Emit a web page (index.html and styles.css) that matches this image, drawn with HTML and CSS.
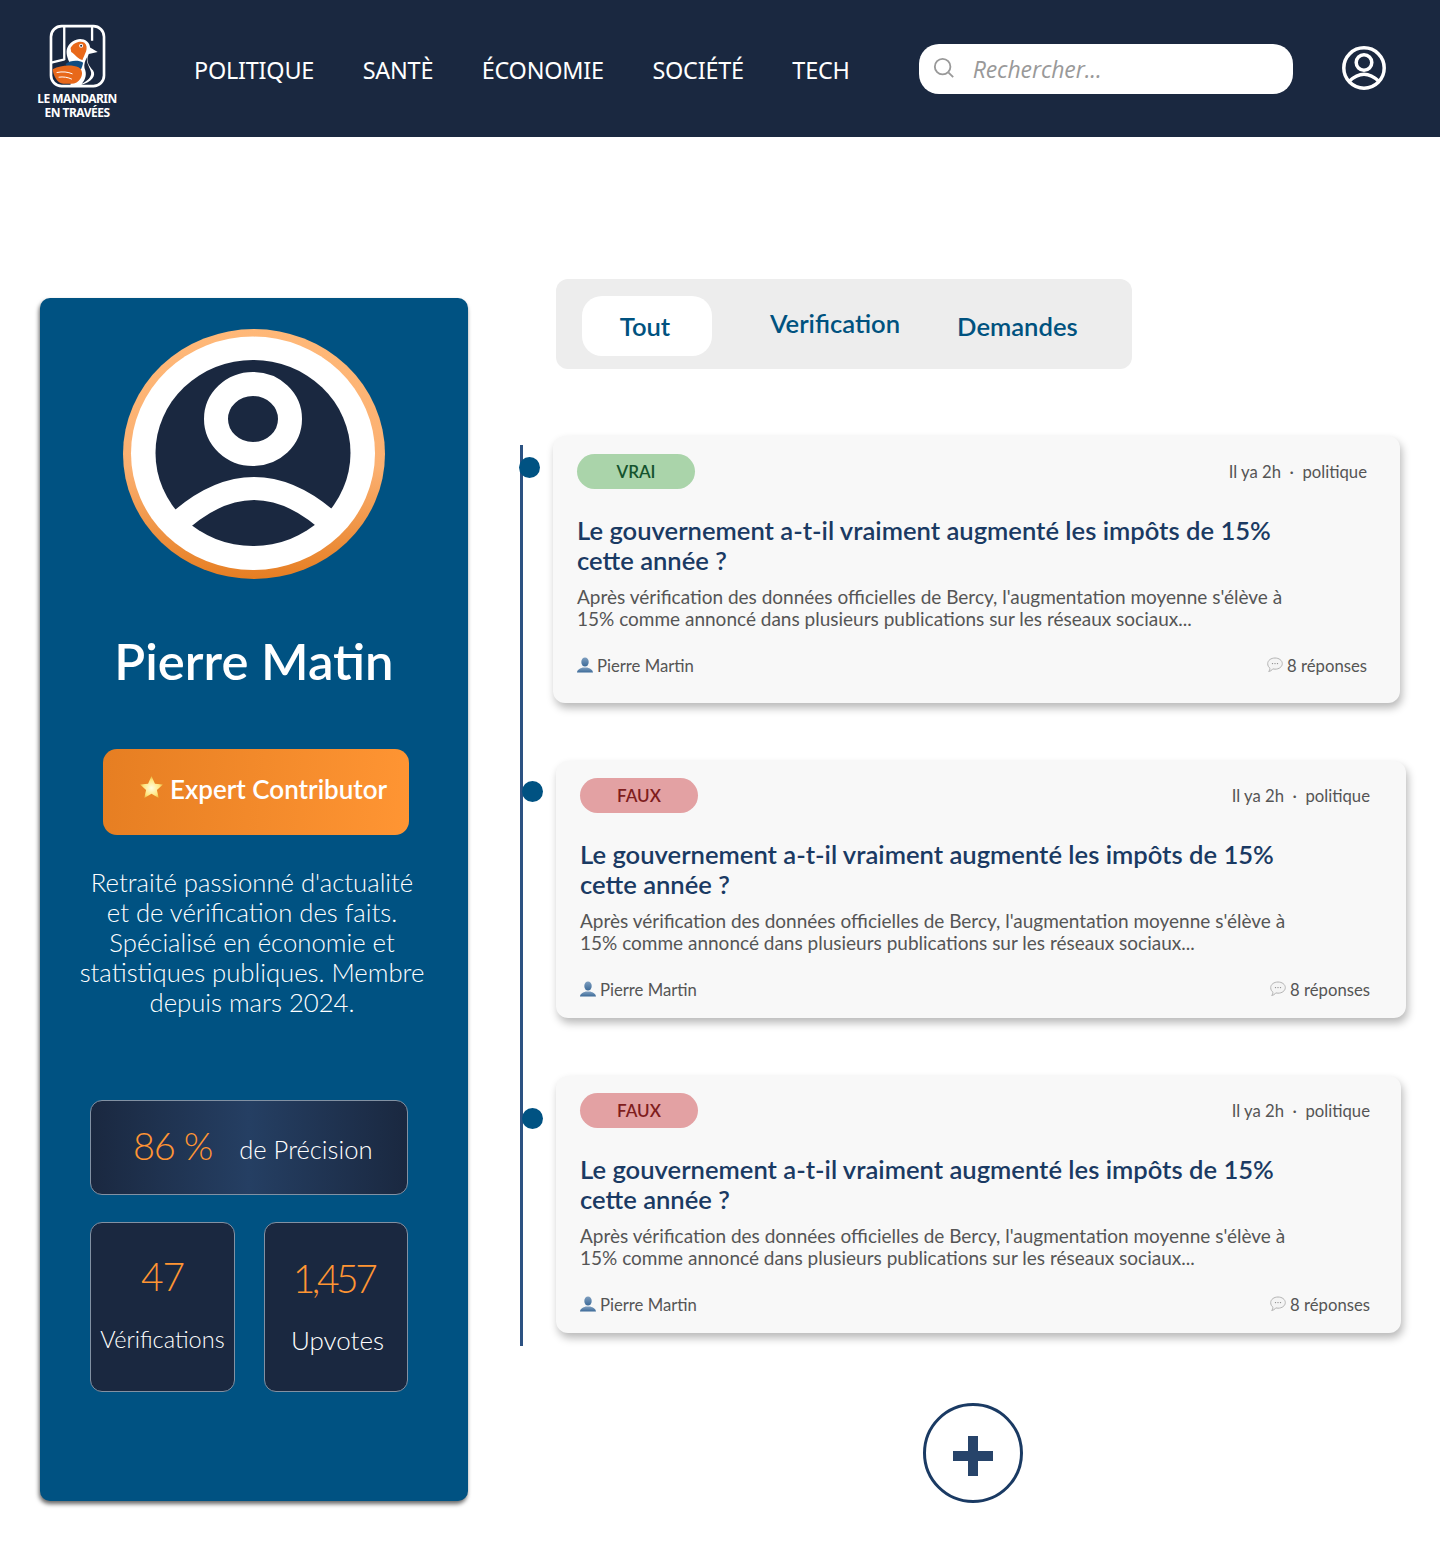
FILE: index.html
```html
<!DOCTYPE html>
<html lang="fr">
<head>
<meta charset="utf-8">
<title>Le Mandarin en Travées</title>
<link rel="stylesheet" href="styles.css">
</head>
<body>
<svg class="defs" width="0" height="0" aria-hidden="true">
  <defs>
    <linearGradient id="ring" x1="0" y1="0" x2="0" y2="1">
      <stop offset="0" stop-color="#ffb878"/><stop offset=".55" stop-color="#fbb071"/><stop offset="1" stop-color="#e67e22"/>
    </linearGradient>
    <radialGradient id="starfill" cx=".5" cy=".55" r=".6">
      <stop offset="0" stop-color="#fffde0"/><stop offset=".6" stop-color="#ffe680"/><stop offset="1" stop-color="#e0a020"/>
    </radialGradient>
    <linearGradient id="personfill" x1="0" y1="0" x2="0" y2="1">
      <stop offset="0" stop-color="#7f9fc0"/><stop offset="1" stop-color="#3c6a98"/>
    </linearGradient>
    <symbol id="person" viewBox="0 0 16 16">
      <ellipse cx="8" cy="5" rx="3.7" ry="4.6" fill="url(#personfill)"/>
      <path d="M0 15.5c.3-3 3-3.8 5.6-5h4.8c2.6 1.200 5.300 2 5.600 5z" fill="url(#personfill)"/>
    </symbol>
    <symbol id="bubble" viewBox="0 0 16 16">
      <path d="M8 1c4 0 7.300 2.400 7.300 5.600S12 12.200 8 12.200c-.8 0-1.500-.1-2.200-.3C4.800 13.300 3.300 14.300 1.700 14.500c.8-.9 1.300-2 1.300-3.200C1.600 10.300.7 8.600.7 6.600.7 3.400 4 1 8 1z" fill="#f4f4f4" stroke="#b4b4b4"/>
      <circle cx="5.500" cy="6.600" r=".7" fill="#888"/><circle cx="8" cy="6.600" r=".7" fill="#888"/><circle cx="10.500" cy="6.600" r=".7" fill="#888"/>
    </symbol>
  </defs>
</svg>

<header class="topbar">
  <a class="brand" href="#">
    <svg class="brand-mark" viewBox="85 40 172 195" aria-hidden="true">
      <rect x="91" y="46" width="160" height="181" rx="32" fill="#1a2840" stroke="#fff" stroke-width="8"/>
      <path d="M131 48v100M215 48v42M92 156l40-10" stroke="#fff" stroke-width="7" fill="none"/>
      <path d="M140 112C150 88 180 76 200 92c7 6 8 12 9 18l23 14-27 6c-10 20 0 35 13 50 10 15-3 35-38 44h-30v-64c-10-15-15-35-10-48z" fill="#fff"/>
      <path d="M150 112c8-17 30-24 42-16 7 6 8 16 5 26-4 11-9 20-11 26-14-2-21-16-34-24z" fill="#e8681a"/>
      <circle cx="182" cy="105" r="6" fill="#fff"/><circle cx="182" cy="105" r="3" fill="#1a2840"/>
      <path d="M135 160c15-12 40-12 53-4-2 9-4 14-6 19l-42-3z" fill="#0f4c81"/>
      <path d="M96 176c26-14 60-14 78-6 12 6 14 22 6 34-6 10-16 16-28 16h-24c-18-2-30-24-32-44z" fill="#e8681a"/>
      <path d="M108 186c18-4 34-2 48 4M114 200c14-2 28 0 40 6" stroke="#fff" stroke-width="3" fill="none"/>
      <path d="M200 140c-4 18 10 32 12 46 2 14-12 26-28 34 12-15 16-30 8-48-2-10 2-22 8-32z" fill="#1a2840"/>
    </svg>
    <span class="brand-name">LE MANDARIN<br>EN TRAVÉES</span>
  </a>
  <nav class="nav">
    <a href="#">POLITIQUE</a>
    <a href="#">SANTÈ</a>
    <a href="#">ÉCONOMIE</a>
    <a href="#">SOCIÉTÉ</a>
    <a href="#">TECH</a>
  </nav>
  <label class="search">
    <svg class="search-icon" viewBox="0 0 24 24" aria-hidden="true"><circle cx="10.500" cy="10.500" r="8.500" fill="none" stroke="#999" stroke-width="2"/><path d="M17 17l5 5" stroke="#999" stroke-width="2" fill="none"/></svg>
    <span class="search-text">Rechercher...</span>
  </label>
  <svg class="account" viewBox="0 0 44 44" aria-hidden="true">
    <circle cx="22" cy="22" r="20.200" fill="none" stroke="#fff" stroke-width="3.500"/>
    <circle cx="22" cy="16.500" r="7.800" fill="none" stroke="#fff" stroke-width="3.500"/>
    <path d="M7 35.500Q22 21 37 35.500" fill="none" stroke="#fff" stroke-width="3.500"/>
  </svg>
</header>

<main class="page">
  <aside class="profile">
    <svg class="avatar" viewBox="0 0 262 250" preserveAspectRatio="none" aria-hidden="true">
      <ellipse cx="131" cy="125" rx="131" ry="125" fill="url(#ring)"/>
      <ellipse cx="130" cy="124.300" rx="122" ry="116.700" fill="#fff"/>
      <ellipse cx="130" cy="124" rx="97.500" ry="93" fill="#1a2840"/>
      <ellipse cx="130" cy="90" rx="37" ry="35" fill="none" stroke="#fff" stroke-width="24"/>
      <path d="M47 201Q131 118 215 201" fill="none" stroke="#fff" stroke-width="23"/>
    </svg>
    <h1 class="profile-name">Pierre Matin</h1>
    <div class="badge">
      <svg class="star" viewBox="0 0 24 24" aria-hidden="true"><path d="M12 1l3.300 7.300 7.700.8-5.800 5.200 1.700 7.700L12 18l-6.900 4 1.700-7.700L1 9.100l7.700-.8z" fill="url(#starfill)"/></svg>
      <span>Expert Contributor</span>
    </div>
    <p class="bio">Retraité passionné d'actualité<br>et de vérification des faits.<br>Spécialisé en économie et<br>statistiques publiques. Membre<br>depuis mars 2024.</p>
    <div class="stat stat-wide">
      <span class="stat-big">86 %</span>
      <span class="stat-side">de Précision</span>
    </div>
    <div class="stat-row">
      <div class="stat stat-tall stat-left">
        <span class="stat-num">47</span>
        <span class="stat-label">Vérifications</span>
      </div>
      <div class="stat stat-tall stat-right">
        <span class="stat-num">1,457</span>
        <span class="stat-label">Upvotes</span>
      </div>
    </div>
  </aside>

  <section class="feed">
    <div class="tabs">
      <a class="tab tab-active" href="#">Tout</a>
      <a class="tab tab-verif" href="#">Verification</a>
      <a class="tab tab-dem" href="#">Demandes</a>
    </div>

    <div class="timeline">
      <article class="card card-one">
        <span class="dot dot-one"></span>
        <div class="card-top">
          <span class="pill pill-true">VRAI</span>
          <span class="meta">Il ya 2h &nbsp;·&nbsp; politique</span>
        </div>
        <h2 class="card-title">Le gouvernement a-t-il vraiment augmenté les impôts de 15%<br>cette année ?</h2>
        <p class="card-text">Après vérification des données officielles de Bercy, l'augmentation moyenne s'élève à<br>15% comme annoncé dans plusieurs publications sur les réseaux sociaux...</p>
        <div class="card-foot">
          <span class="foot-item"><svg class="foot-icon"><use href="#person"/></svg>Pierre Martin</span>
          <span class="foot-item"><svg class="foot-icon"><use href="#bubble"/></svg>8 réponses</span>
        </div>
      </article>

      <article class="card card-two">
        <span class="dot dot-two"></span>
        <div class="card-top">
          <span class="pill pill-false">FAUX</span>
          <span class="meta">Il ya 2h &nbsp;·&nbsp; politique</span>
        </div>
        <h2 class="card-title">Le gouvernement a-t-il vraiment augmenté les impôts de 15%<br>cette année ?</h2>
        <p class="card-text">Après vérification des données officielles de Bercy, l'augmentation moyenne s'élève à<br>15% comme annoncé dans plusieurs publications sur les réseaux sociaux...</p>
        <div class="card-foot">
          <span class="foot-item"><svg class="foot-icon"><use href="#person"/></svg>Pierre Martin</span>
          <span class="foot-item"><svg class="foot-icon"><use href="#bubble"/></svg>8 réponses</span>
        </div>
      </article>

      <article class="card card-three">
        <span class="dot dot-three"></span>
        <div class="card-top">
          <span class="pill pill-false">FAUX</span>
          <span class="meta">Il ya 2h &nbsp;·&nbsp; politique</span>
        </div>
        <h2 class="card-title">Le gouvernement a-t-il vraiment augmenté les impôts de 15%<br>cette année ?</h2>
        <p class="card-text">Après vérification des données officielles de Bercy, l'augmentation moyenne s'élève à<br>15% comme annoncé dans plusieurs publications sur les réseaux sociaux...</p>
        <div class="card-foot">
          <span class="foot-item"><svg class="foot-icon"><use href="#person"/></svg>Pierre Martin</span>
          <span class="foot-item"><svg class="foot-icon"><use href="#bubble"/></svg>8 réponses</span>
        </div>
      </article>
    </div>

    <button class="more" type="button" aria-label="Plus">
      <svg class="more-icon" viewBox="0 0 40 40" aria-hidden="true"><path d="M15 0h10v15h15v10H25v15H15V25H0V15h15z" fill="#27446a"/></svg>
    </button>
  </section>
</main>
</body>
</html>
```

FILE: styles.css
```css
* { box-sizing: border-box; }
html, body { margin: 0; padding: 0; }
body {
  background: #fff;
  font-family: "Lato", "Liberation Sans", sans-serif;
  color: #1a2840;
  min-height: 1544px;
}
a { color: inherit; text-decoration: none; }
.defs { display: block; height: 0; }

/* top bar */
.topbar {
  height: 137px;
  background: #1a2840;
  display: flex;
  align-items: center;
  padding-left: 38px;
}
.brand {
  width: 78px;
  display: flex;
  flex-direction: column;
  align-items: center;
  color: #fff;
  margin-top: 6px;
}
.brand-mark { width: 57px; height: 65px; display: block; }
.brand-name {
  font-family: "Noto Sans", sans-serif;
  font-weight: 700;
  font-size: 12px;
  line-height: 14px;
  text-align: center;
  letter-spacing: -.5px;
  white-space: nowrap;
  margin-top: 3px;
}
.nav {
  display: flex;
  gap: 48.5px;
  margin-left: 78px;
  margin-top: 2px;
  color: #fff;
  font-family: "Noto Sans", sans-serif;
  font-size: 23.4px;
  line-height: 32px;
  letter-spacing: -.2px;
}
.search {
  width: 374px;
  height: 50px;
  margin-left: 69px;
  margin-top: 1px;
  background: #fff;
  border-radius: 20px;
  display: flex;
  align-items: center;
  padding-left: 14px;
}
.search-icon { width: 22px; height: 22px; margin-top: -3px; }
.search-text {
  margin-left: 18px;
  font-family: "Open Sans", sans-serif;
  font-style: italic;
  font-size: 23px;
  letter-spacing: -.1px;
  color: #999;
}
.account { width: 44px; height: 44px; margin-left: 49px; margin-top: -1px; }

/* layout */
.page {
  display: flex;
  align-items: flex-start;
  padding-left: 40px;
}

/* profile */
.profile {
  width: 428px;
  height: 1203px;
  margin-top: 161px;
  background: #005282;
  border-radius: 10px;
  box-shadow: -1px 3px 4px rgba(0, 0, 0, .6);
  padding-top: 31px;
  color: #fff;
  display: flex;
  flex-direction: column;
}
.avatar { width: 262px; height: 250px; margin-left: 83px; display: block; }
.profile-name {
  margin: 44px 0 0;
  font-size: 50.8px;
  line-height: 76px;
  font-weight: 600;
  text-align: center;
}
.badge {
  width: 306px;
  height: 86px;
  margin: 50px 0 0 63px;
  border-radius: 14px;
  background: linear-gradient(95deg, #e67e22, #ff9533);
  display: flex;
  align-items: center;
  padding: 0 0 6px 36px;
  font-size: 26px;
  font-weight: 600;
  color: #fff;
}
.star { width: 25px; height: 25px; margin-right: 6px; margin-top: -3px; }
.bio {
  margin: 32px 0 0;
  font-size: 25.7px;
  line-height: 30px;
  font-weight: 300;
  text-align: center;
  padding-right: 4px;
}
.stat {
  background: #1a2840;
  border: 1px solid #8291a3;
  border-radius: 12px;
}
.stat-wide {
  width: 318px;
  height: 95px;
  margin: 83px 0 0 50px;
  background: linear-gradient(90deg, #1a2840 0%, #253f63 50%, #1a2840 100%);
  display: flex;
  align-items: center;
}
.stat-big {
  margin-left: 42px;
  font-size: 38px;
  font-weight: 300;
  letter-spacing: -1.200px;
  color: #ff9533;
  margin-top: -5px;
}
.stat-side {
  margin-left: 27px;
  font-size: 25.6px;
  font-weight: 300;
  color: #fff;
  margin-top: 3px;
}
.stat-row {
  display: flex;
  gap: 29px;
  margin: 27px 0 0 50px;
}
.stat-tall {
  height: 170px;
  display: flex;
  flex-direction: column;
  align-items: center;
}
.stat-left { width: 145px; }
.stat-right { width: 144px; padding-left: 3px; }
.stat-num {
  margin-top: 28px;
  font-size: 39px;
  line-height: 50px;
  font-weight: 300;
  letter-spacing: -1px;
  color: #ff9533;
}
.stat-right .stat-num { letter-spacing: -3.500px; margin-top: 30px; margin-right: 8px; }
.stat-label {
  margin-top: 21px;
  font-size: 23.5px;
  line-height: 34px;
  font-weight: 300;
  color: #fff;
  white-space: nowrap;
}
.stat-right .stat-label { font-size: 26px; margin-top: 20px; }

/* feed */
.feed {
  margin-left: 52px;
  margin-top: 142px;
  width: 880px;
  display: flex;
  flex-direction: column;
}
.tabs {
  width: 576px;
  height: 90px;
  margin-left: 36px;
  background: #ededed;
  border-radius: 12px;
  display: flex;
  align-items: center;
  padding-left: 26px;
  font-size: 25.6px;
  font-weight: 600;
  color: #00527f;
}
.tab-active {
  width: 130px;
  height: 60px;
  padding-right: 4px;
  background: #fff;
  border-radius: 20px;
  display: flex;
  align-items: center;
  justify-content: center;
  margin-top: 4px;
}
.tab-verif { margin-left: 58px; margin-top: -2px; }
.tab-dem { margin-left: 57px; margin-top: 4px; }

.timeline {
  position: relative;
  margin-top: 67px;
  height: 910px;
}
.timeline::before {
  content: "";
  position: absolute;
  left: 0;
  top: 9px;
  width: 3px;
  height: 901px;
  background: #2c5282;
}
.card {
  position: relative;
  background: #f8f8f8;
  border-radius: 12px;
  box-shadow: 2px 5px 9px rgba(0, 0, 0, .28);
  padding: 18px 33px 0 24px;
}
.card-one { width: 847px; height: 267px; margin-left: 33px; }
.card-two { width: 850px; height: 257px; margin: 58px 0 0 36px; padding-top: 17px; padding-right: 36px; }
.card-three { width: 845px; height: 257px; margin: 58px 0 0 36px; padding-top: 17px; padding-right: 31px; }
.dot {
  position: absolute;
  width: 21px;
  height: 21px;
  border-radius: 50%;
  background: #005282;
}
.dot-one { left: -34px; top: 21px; }
.dot-two { left: -34px; top: 20px; }
.dot-three { left: -34px; top: 32px; }
.card-top {
  display: flex;
  align-items: center;
  justify-content: space-between;
  height: 35px;
}
.pill {
  width: 118px;
  height: 35px;
  border-radius: 18px;
  display: flex;
  align-items: center;
  justify-content: center;
  font-size: 17px;
  font-weight: 600;
}
.pill-true { background: #aad4aa; color: #14532d; }
.pill-false { background: #e3a1a3; color: #7f1d1d; }
.meta, .foot-item {
  font-size: 16.7px;
  color: #555;
  white-space: nowrap;
}
.card-title {
  margin: 26px 0 0;
  font-size: 25.6px;
  line-height: 30px;
  font-weight: 600;
  color: #1a3a63;
}
.card-text {
  margin: 11px 0 0;
  font-size: 19px;
  line-height: 22px;
  color: #555;
}
.card-foot {
  display: flex;
  justify-content: space-between;
  margin-top: 24px;
}
.foot-item { display: flex; align-items: center; line-height: 24px; }
.foot-icon { width: 16px; height: 16px; margin-right: 4px; margin-top: -2px; }

.more {
  width: 100px;
  height: 100px;
  margin: 57px 0 0 403px;
  padding: 0;
  background: #fff;
  border: 3px solid #1a3a63;
  border-radius: 50%;
  display: flex;
  align-items: center;
  justify-content: center;
}
.more-icon { width: 40px; height: 40px; margin-top: 6px; }
```
